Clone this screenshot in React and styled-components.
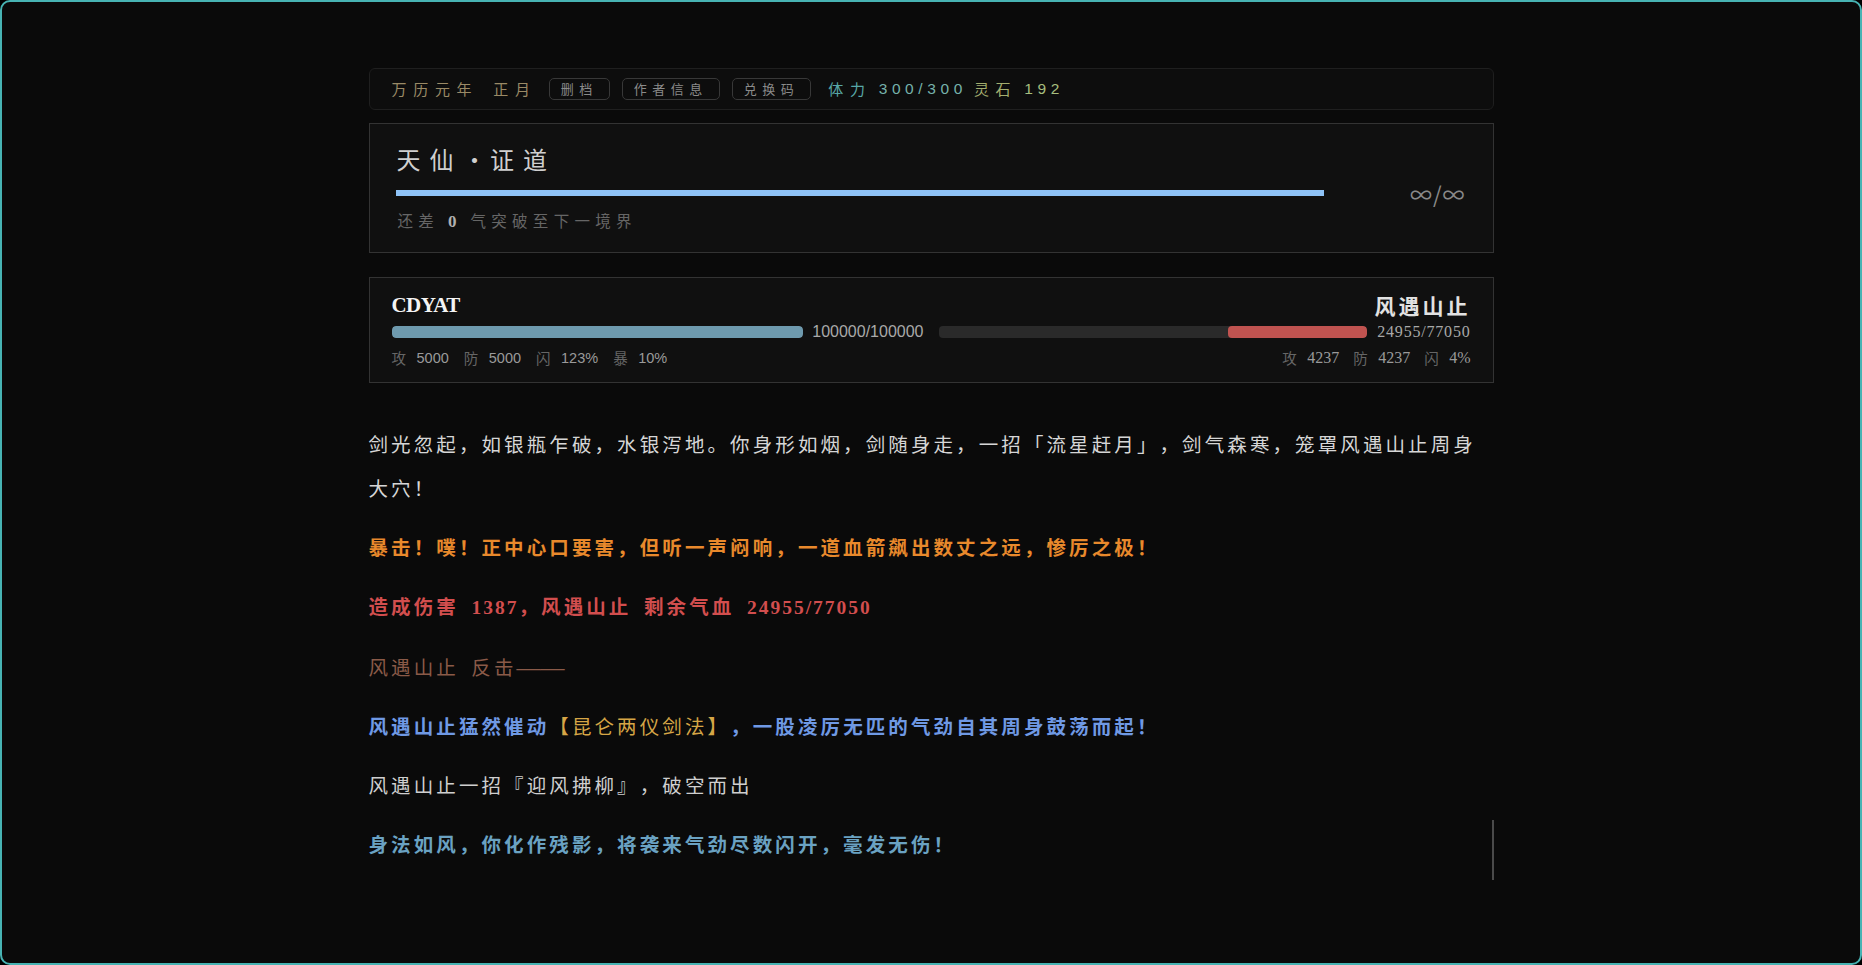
import React from 'react';
import styled, { createGlobalStyle } from 'styled-components';

const Global = createGlobalStyle`
  html, body { margin: 0; padding: 0; background: #000; }
  body {
    font-family: "Noto Sans CJK SC", "Noto Sans", sans-serif;
    color: #ccc;
    text-spacing-trim: space-all;
  }
  *, *::before, *::after { box-sizing: border-box; }
`;

const Frame = styled.div`
  height: 100vh;
  border: 2px solid #47b3b3;
  border-radius: 10px;
  background: #0a0a0a;
  overflow: hidden;
`;

const Main = styled.main`
  width: 1125px;
  margin: 0 auto;
  padding-top: 66px;
  display: flex;
  flex-direction: column;
`;

const Lat = styled.span`
  font-family: var(--lat-font, "Liberation Serif"), serif;
  letter-spacing: var(--lat-ls, 1px);
`;

const Dash = styled.span`
  font-family: "Liberation Serif", serif;
  font-size: 24px;
  letter-spacing: 0;
`;

const LAT = /([A-Za-z0-9%/.]+)/;
const DASH = /(——)/;
function Mixed({ children }) {
  const s = String(children);
  return s
    .split(DASH)
    .filter(Boolean)
    .flatMap((chunk, k) =>
      DASH.test(chunk)
        ? [<Dash key={`d${k}`}>{chunk}</Dash>]
        : chunk
            .split(LAT)
            .filter(Boolean)
            .map((p, i) =>
              LAT.test(p) ? (
                <Lat key={`${k}-${i}`}>{p}</Lat>
              ) : (
                <React.Fragment key={`${k}-${i}`}>{p}</React.Fragment>
              )
            )
    );
}

/* ---------- top bar ---------- */
const TopBar = styled.header`
  height: 42px;
  display: flex;
  align-items: center;
  gap: 12px;
  padding: 0 22px;
  border: 1px solid #1f1f1f;
  border-radius: 6px;
  background: #0d0d0d;
  font-size: 15px;
  letter-spacing: 6.7px;
  line-height: 20px;
`;

const DateText = styled.div`
  display: flex;
  gap: 15px;
  color: #9a8a66;
`;

const Btn = styled.button`
  height: 22px;
  padding: 0 11px;
  border: 1px solid #383838;
  border-radius: 5px;
  background: transparent;
  color: #8a8a8a;
  font-family: inherit;
  font-size: 13px;
  letter-spacing: 5.5px;
  line-height: 20px;
  cursor: pointer;
`;

const Resources = styled.div`
  display: flex;
  align-items: center;
  gap: 7px;
  margin-left: 5px;
`;

const ResLabel = styled.span`
  color: ${(p) => p.$c};
`;

const ResNum = styled.span`
  color: ${(p) => p.$c};
  font-family: "Liberation Sans", sans-serif;
  font-size: 15.5px;
  letter-spacing: 4.6px;
`;

/* ---------- realm card ---------- */
const Card = styled.section`
  background: #101010;
  border: 1px solid #333;
`;

const RealmCard = styled(Card)`
  margin-top: 13px;
  padding: 19px 27px 20px 26px;
  display: flex;
  flex-direction: column;
`;

const RealmTitle = styled.h1`
  margin: 0;
  font-size: 24px;
  font-weight: 400;
  line-height: 32px;
  letter-spacing: 9px;
  color: #cfcfcf;
  padding-left: 1px;
`;

const TitleDot = styled.span`
  letter-spacing: 3.5px;
`;

const ProgressRow = styled.div`
  margin-top: 15px;
  height: 6px;
  display: flex;
  align-items: center;
`;

const ProgressBar = styled.div`
  flex: 1;
  height: 6px;
  background: #8fc3f7;
`;

const ProgressLabel = styled.div`
  width: 142px;
  text-align: right;
  font-size: 22px;
  line-height: 1;
  letter-spacing: 1px;
  color: #8a8a8a;
`;

const RealmHint = styled.div`
  margin-top: 14px;
  line-height: 20px;
  font-size: 15.5px;
  letter-spacing: 5.3px;
  color: #666;
  padding-left: 2px;
`;

const HintNum = styled.b`
  color: #b0b0b0;
  font-family: "Liberation Serif", serif;
  font-size: 17px;
`;

/* ---------- battle card ---------- */
const BattleCard = styled(Card)`
  margin-top: 24px;
  padding: 13px 22px 15px 22px;
  display: flex;
  flex-direction: column;
`;

const NameRow = styled.div`
  height: 28px;
  display: flex;
  align-items: center;
  justify-content: space-between;
`;

const PlayerName = styled.div`
  font-family: "Liberation Serif", serif;
  font-weight: 700;
  font-size: 21px;
  letter-spacing: -0.6px;
  color: #f4f4f4;
`;

const EnemyName = styled.div`
  font-weight: 700;
  font-size: 21px;
  letter-spacing: 3px;
  color: #e2e2e2;
`;

const HpRow = styled.div`
  margin-top: 7px;
  height: 12px;
  display: grid;
  grid-template-columns: 1fr 1fr;
  gap: 15px;
`;

const HpSide = styled.div`
  display: flex;
  align-items: center;
  gap: ${(p) => (p.$enemy ? 10 : 9)}px;
  height: 12px;
`;

const HpTrack = styled.div`
  flex: 1;
  height: 12px;
  border-radius: 4px;
  background: #2a2a2a;
  display: flex;
  justify-content: ${(p) => (p.$enemy ? 'flex-end' : 'flex-start')};
  overflow: hidden;
`;

const HpFill = styled.div`
  height: 100%;
  border-radius: 4px;
  background: ${(p) => p.$c};
`;

const HpText = styled.span`
  line-height: 12px;
  font-size: 16px;
  font-family: ${(p) => (p.$enemy ? '"Liberation Serif", serif' : '"Liberation Sans", sans-serif')};
  letter-spacing: ${(p) => (p.$enemy ? 0.8 : 0)}px;
  color: #a9a9a9;
  white-space: nowrap;
`;

const StatRow = styled.div`
  margin-top: 11px;
  height: 18px;
  display: flex;
  justify-content: space-between;
  align-items: center;
`;

const Stats = styled.div`
  display: flex;
  align-items: center;
  gap: ${(p) => (p.$enemy ? 14 : 15)}px;
`;

const Stat = styled.span`
  display: flex;
  align-items: center;
  gap: 10.5px;
  line-height: 18px;
`;

const StatLabel = styled.span`
  font-size: 14.5px;
  color: #666;
`;

const StatValue = styled.span`
  font-size: ${(p) => (p.$enemy ? 16 : 14.5)}px;
  font-family: ${(p) => (p.$enemy ? '"Liberation Serif", serif' : '"Liberation Sans", sans-serif')};
  color: #9a9a9a;
`;

/* ---------- log ---------- */
const LogArea = styled.div`
  position: relative;
  margin-top: 39px;
`;

const tones = {
  plain: { c: '#d6d6d6', w: 400 },
  crit: { c: '#e8892c', w: 700 },
  dmg: { c: '#d24e4e', w: 700 },
  counter: { c: '#8a5a48', w: 400 },
  skill: { c: '#6f99e4', w: 700 },
  move: { c: '#cfcfcf', w: 400 },
  dodge: { c: '#6aa2c2', w: 700 },
};

const LogLine = styled.p`
  margin: 0 0 15px;
  font-size: 19.5px;
  line-height: 44px;
  letter-spacing: 3.1px;
  word-spacing: 5px;
  text-spacing-trim: space-all;
  --lat-ls: 2px;
  color: ${(p) => tones[p.$tone].c};
  font-weight: ${(p) => tones[p.$tone].w};
`;

const Highlight = styled.span`
  color: #d6a646;
  font-weight: 400;
`;

const ScrollThumb = styled.div`
  position: absolute;
  right: 0;
  top: 398px;
  width: 2px;
  height: 60px;
  background: #4a4a4a;
`;

const LOG = [
  { tone: 'plain', parts: [{ t: '剑光忽起，如银瓶乍破，水银泻地。你身形如烟，剑随身走，一招「流星赶月」，剑气森寒，笼罩风遇山止周身大穴！' }] },
  { tone: 'crit', parts: [{ t: '暴击！噗！正中心口要害，但听一声闷响，一道血箭飙出数丈之远，惨厉之极！' }] },
  { tone: 'dmg', parts: [{ t: '造成伤害 1387，风遇山止 剩余气血 24955/77050' }] },
  { tone: 'counter', parts: [{ t: '风遇山止 反击——' }] },
  {
    tone: 'skill',
    parts: [
      { t: '风遇山止猛然催动' },
      { t: '【昆仑两仪剑法】', hl: true },
      { t: '，一股凌厉无匹的气劲自其周身鼓荡而起！' },
    ],
  },
  { tone: 'move', parts: [{ t: '风遇山止一招『迎风拂柳』，破空而出' }] },
  { tone: 'dodge', parts: [{ t: '身法如风，你化作残影，将袭来气劲尽数闪开，毫发无伤！' }] },
];

const player = { name: 'CDYAT', hp: 100000, max: 100000, stats: [['攻', '5000'], ['防', '5000'], ['闪', '123%'], ['暴', '10%']] };
const enemy = { name: '风遇山止', hp: 24955, max: 77050, stats: [['攻', '4237'], ['防', '4237'], ['闪', '4%']] };

export default function App() {
  return (
    <>
      <Global />
      <Frame>
        <Main>
          <TopBar>
            <DateText>
              <span>万历元年</span>
              <span>正月</span>
            </DateText>
            <Btn>删档</Btn>
            <Btn>作者信息</Btn>
            <Btn>兑换码</Btn>
            <Resources>
              <ResLabel $c="#58a7a7">体力</ResLabel>
              <ResNum $c="#76b2ab">300/300</ResNum>
              <ResLabel $c="#a3ad6e">灵石</ResLabel>
              <ResNum $c="#a6bd7e">192</ResNum>
            </Resources>
          </TopBar>

          <RealmCard>
            <RealmTitle>
              天仙<TitleDot>•</TitleDot>证道
            </RealmTitle>
            <ProgressRow>
              <ProgressBar />
              <ProgressLabel>∞/∞</ProgressLabel>
            </ProgressRow>
            <RealmHint>
              还差 <HintNum>0</HintNum> 气突破至下一境界
            </RealmHint>
          </RealmCard>

          <BattleCard>
            <NameRow>
              <PlayerName>{player.name}</PlayerName>
              <EnemyName>{enemy.name}</EnemyName>
            </NameRow>
            <HpRow>
              <HpSide>
                <HpTrack>
                  <HpFill $c="#6e9aae" style={{ width: `${(player.hp / player.max) * 100}%` }} />
                </HpTrack>
                <HpText>
                  {player.hp}/{player.max}
                </HpText>
              </HpSide>
              <HpSide $enemy>
                <HpTrack $enemy>
                  <HpFill $c="#c05350" style={{ width: `${(enemy.hp / enemy.max) * 100}%` }} />
                </HpTrack>
                <HpText $enemy>
                  {enemy.hp}/{enemy.max}
                </HpText>
              </HpSide>
            </HpRow>
            <StatRow>
              <Stats>
                {player.stats.map(([k, v]) => (
                  <Stat key={k}>
                    <StatLabel>{k}</StatLabel>
                    <StatValue>{v}</StatValue>
                  </Stat>
                ))}
              </Stats>
              <Stats $enemy>
                {enemy.stats.map(([k, v]) => (
                  <Stat key={k}>
                    <StatLabel>{k}</StatLabel>
                    <StatValue $enemy>{v}</StatValue>
                  </Stat>
                ))}
              </Stats>
            </StatRow>
          </BattleCard>

          <LogArea>
            {LOG.map((line, i) => (
              <LogLine key={i} $tone={line.tone}>
                {line.parts.map((p, j) =>
                  p.hl ? (
                    <Highlight key={j}>
                      <Mixed>{p.t}</Mixed>
                    </Highlight>
                  ) : (
                    <React.Fragment key={j}>
                      <Mixed>{p.t}</Mixed>
                    </React.Fragment>
                  )
                )}
              </LogLine>
            ))}
            <ScrollThumb />
          </LogArea>
        </Main>
      </Frame>
    </>
  );
}
